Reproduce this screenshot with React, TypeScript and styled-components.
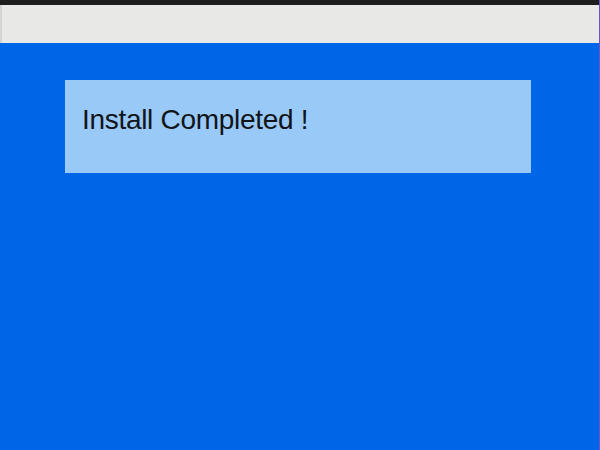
import React from "react";
import styled, { createGlobalStyle } from "styled-components";

const Global = createGlobalStyle`
  html, body { margin: 0; padding: 0; }
  body { width: 600px; height: 450px; overflow: hidden; background: #0066e6; font-family: "Liberation Sans", Arial, sans-serif; }
`;

const Screen = styled.div`
  width: 600px;
  height: 450px;
  display: flex;
  flex-direction: column;
  background: #0066e8;
  border-right: 1px solid #6a4fd8;
  box-sizing: border-box;
`;

const TopStrip = styled.div`
  height: 5px;
  background: #1e1e1e;
  flex: none;
`;

const Header = styled.div`
  height: 38px;
  background: #e8e9e7;
  border-left: 2px solid #d4d5d3;
  flex: none;
`;

const Main = styled.div`
  flex: 1;
  padding: 37px 0 0 65px;
`;

const MessageBox = styled.div`
  width: 466px;
  height: 93px;
  box-sizing: border-box;
  background: #99c9f7;
  padding: 24px 0 0 17px;
`;

const Message = styled.div`
  font-size: 28px;
  line-height: 32px;
  letter-spacing: -0.3px;
  color: #111418;
`;

export default function App() {
  return (
    <>
      <Global />
      <Screen>
        <TopStrip />
        <Header />
        <Main>
          <MessageBox>
            <Message>Install Completed !</Message>
          </MessageBox>
        </Main>
      </Screen>
    </>
  );
}
